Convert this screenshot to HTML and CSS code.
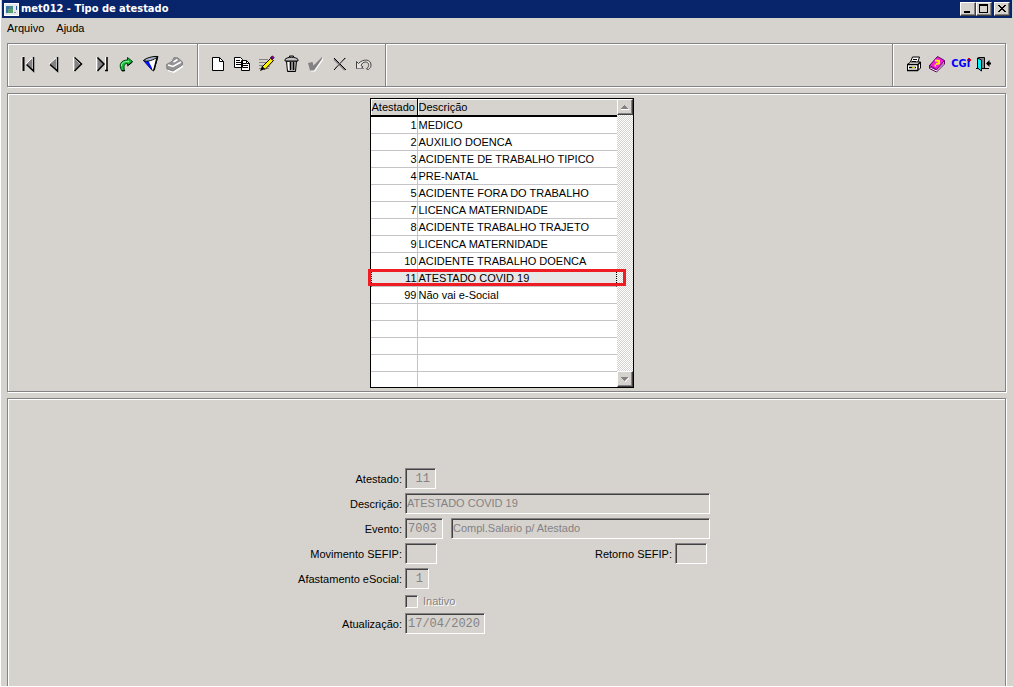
FILE: index.html
```html
<!DOCTYPE html>
<html lang="pt-BR">
<head>
<meta charset="utf-8">
<title>met012 - Tipo de atestado</title>
<link rel="stylesheet" href="styles.css">
</head>
<body>
<div class="window">
  <header class="titlebar">
    <svg class="app-icon" width="15" height="13" viewBox="0 0 15 13" shape-rendering="crispEdges">
      <rect width="15" height="13" fill="#fff"/><rect x="1" y="1" width="13" height="11" fill="#e4e8ec"/>
      <rect x="2" y="3" width="7" height="7" fill="#4a8c8c"/><rect x="2" y="3" width="3" height="7" fill="#3b78a8"/><rect x="4" y="6" width="5" height="4" fill="#5ca070"/>
      <rect x="12" y="3" width="1" height="4" fill="#245a9c"/><rect x="10" y="9" width="2" height="1" fill="#8090a0"/>
    </svg>
    <h1 class="title">met012 - Tipo de atestado</h1>
    <div class="win-buttons">
      <button class="win-btn" aria-label="Minimizar"><svg width="12" height="10" viewBox="0 0 12 10"><rect x="2" y="7" width="6" height="2"/></svg></button>
      <button class="win-btn" aria-label="Maximizar"><svg width="12" height="10" viewBox="0 0 12 10"><path d="M1 0h9v9H1zM2 2v6h7V2z" fill-rule="evenodd"/></svg></button>
      <button class="win-btn win-close" aria-label="Fechar"><svg width="12" height="10" viewBox="0 0 12 10" shape-rendering="crispEdges"><path d="M2 1h2v1h1v1h2V2h1V1h2v1H9v1H8v1H7v1h1v1h1v1h1v1H8V7H7V6H5v1H4v1H2V7h1V6h1V5h1V4H4V3H3V2H2z"/></svg></button>
    </div>
  </header>
  <nav class="menu">
    <button class="menu-item">Arquivo</button>
    <button class="menu-item">Ajuda</button>
  </nav>

  <div class="toolbar" role="toolbar">
    <div class="group group-nav">
      <button class="tool" aria-label="Primeiro"><svg viewBox="0 0 20 20"><path d="M4 3v14M4 3h2" stroke="#fff"/><path d="M5.500 3v14" stroke="#000" stroke-width="2"/><path d="M14.500 3.500v13L8 10z" fill="#848284" stroke="#fff"/><path d="M15.500 3v14L8.500 10.500" fill="none" stroke="#000" stroke-width="1.500"/></svg></button>
      <button class="tool" aria-label="Anterior"><svg viewBox="0 0 20 20"><path d="M13.500 3.500v13L6 10z" fill="#848284" stroke="#fff"/><path d="M14.500 3v14L7 10.500" fill="none" stroke="#000" stroke-width="1.500"/></svg></button>
      <button class="tool" aria-label="Próximo"><svg viewBox="0 0 20 20"><path d="M7.500 3.500v13L14 10z" fill="#848284"/><path d="M6.500 17V3.500L13 10" fill="none" stroke="#fff"/><path d="M7.500 3.500L14.500 10l-7 7" fill="none" stroke="#000" stroke-width="1.500"/></svg></button>
      <button class="tool" aria-label="Último"><svg viewBox="0 0 20 20"><path d="M5.500 3.500v13L12 10z" fill="#848284"/><path d="M4.500 17V3.500" stroke="#fff"/><path d="M5.500 3.500L12 10l-6.500 7" fill="none" stroke="#000" stroke-width="1.500"/><path d="M13.500 3v13" stroke="#fff"/><path d="M15 3v14M13 16.500h3" stroke="#000" stroke-width="1.500"/></svg></button>
      <button class="tool" aria-label="Ir para"><svg viewBox="0 0 20 20"><path d="M11.500 3.500L16.500 7.500l-5 4V9.500C8 9.500 7.500 12 8.500 17H6C2 11 5 6 11.500 6z" fill="#18c038" stroke="#003c10"/><path d="M5.500 12C5 9 8 7 13 7.500" fill="none" stroke="#94ff9c"/><path d="M16.500 8l-5 4M9 16.500H6" stroke="#000"/></svg></button>
      <button class="tool" aria-label="Filtrar"><svg viewBox="0 0 20 20"><path d="M2.500 6.500L17 2.500 12.500 17 10 15z" fill="#fff" stroke="#000"/><path d="M3 7l4.500 0L11 14v2.500z" fill="#0010ff"/><path d="M2.500 6.500C6 8.500 13 6 17 2.500 12 2 5 4 2.500 6.500z" fill="#a8b4c8" stroke="#000"/><path d="M16 4l-3 12" stroke="#000" stroke-width="1.500"/></svg></button>
      <button class="tool" aria-label="Pesquisar"><svg viewBox="0 0 20 20"><path d="M2 12L8 9l2-4 5 1 3 4v3l-9 6-6-2z" fill="#fff"/><path d="M1.500 10.500L7 7.500l2-4 4 .5 4.500 4v3l-9.500 6-6-2z" fill="#949294" stroke="#848284"/><path d="M3 11l5 1.500 8-4.500M8.500 8l4-2.500" fill="none" stroke="#fff" stroke-width="1.500"/></svg></button>
    </div>
    <div class="group group-edit">
      <button class="tool" aria-label="Novo"><svg viewBox="0 0 20 20"><path d="M4.500 3.500h7l4 4v9h-11z" fill="#fff" stroke="#000"/><path d="M11.500 3.500v4h4" fill="none" stroke="#000"/></svg></button>
      <button class="tool" aria-label="Copiar"><svg viewBox="0 0 20 20"><path d="M2.500 3.500h6l2 2v8h-8zM9.500 6.500h5l3 3v7h-8z" fill="#fff" stroke="#000"/><path d="M4 6.500h4M4 8.500h5M4 10.500h5M11 9.500h3M11 11.500h5M11 13.500h5M14.500 6.500v3h3" fill="none" stroke="#000"/></svg></button>
      <button class="tool" aria-label="Editar"><svg viewBox="0 0 20 20"><path d="M2 5.500h9M2 8.500h8M2 11.500h6M2 14.500h10M10 12.500h3" stroke="#848284"/><path d="M5 13L13.500 4.500l3 2L8 15.500z" fill="#ffef00" stroke="#000"/><path d="M13.500 3.500l2-1.500 1.500 1.500-1.500 2z" fill="#840084" stroke="#420042"/><path d="M3 17l2-5 3 3z" fill="#000"/></svg></button>
      <button class="tool" aria-label="Excluir"><svg viewBox="0 0 20 20"><path d="M5.500 7h10l-1 10.500h-8z" fill="#b5b2b5" stroke="#000"/><path d="M7.500 8l.5 8" stroke="#fff" stroke-width="2"/><path d="M9.500 8v8M12.500 8v8" stroke="#000" stroke-width="1.500"/><path d="M4 5.500c2-3 11-3 13 0v1.500H4z" fill="#c6c3c6" stroke="#000"/><path d="M8.500 3V2h4v1" fill="none" stroke="#000"/></svg></button>
      <button class="tool" aria-label="Confirmar"><svg viewBox="0 0 20 20"><path d="M5 11l3-1 1 3 9-9v2L10 17.500H6z" fill="#fff"/><path d="M3 9l4.500-1 1 3.500L17 3v2L9 16.500H5z" fill="#848284"/></svg></button>
      <button class="tool" aria-label="Cancelar"><svg viewBox="0 0 20 20"><path d="M4 5l11 11" stroke="#848284" stroke-width="2"/><path d="M4 4l12 12M15 4L4 16" stroke="#000"/><path d="M16 4L5 14" stroke="#848284"/></svg></button>
      <button class="tool" aria-label="Desfazer"><svg viewBox="0 0 20 20"><path d="M2.500 14.500v-7l2 2C9 4.500 17 5 17 11c0 2-1 3-2.500 4.500l-2-.5C16 12 15 8 11.500 8 9 8 8 9.500 7 11.500l2 1.500-2 1.500z" fill="#e6e4e0" stroke="#424142"/><path d="M3 14.500h7" stroke="#848284"/></svg></button>
    </div>
    <div class="group group-spare"></div>
    <div class="group group-exit">
      <button class="tool" aria-label="Imprimir"><svg viewBox="0 0 20 20"><path d="M6.500 8l2-5h7l-2 6" fill="#fff" stroke="#000"/><path d="M9 5.500h4M8 7.500h4" stroke="#000"/><path d="M3.500 10.500l3-2.500h10v6l-2.500 2.500H3.500z" fill="#fff" stroke="#000"/><path d="M3 10.500h11v6M14 10.500l2.500-2.500M5 13.500h7M3 16.500h11" fill="none" stroke="#000" stroke-width="1.500"/><path d="M8 13.500h3" stroke="#d8c800"/></svg></button>
      <button class="tool" aria-label="Ajuda"><svg viewBox="0 0 20 20"><path d="M2.500 11.500v3l7 3.500 8-8V7z" fill="#fff" stroke="#5c005c"/><path d="M2.500 11.500l8-9 7 4-8 9z" fill="#f718e0" stroke="#5c005c"/><path d="M3 13l6.500 3L17 8.500" fill="none" stroke="#840084"/><path d="M8 6.500l4 .5v2.500l-3 .5M7.500 11.500H9" fill="none" stroke="#ffef00" stroke-width="2"/></svg></button>
      <button class="tool cgi">CGi</button>
      <button class="tool" aria-label="Sair"><svg viewBox="0 0 20 20"><path d="M2 14.500h13" stroke="#000"/><path d="M4.500 3.500h6v11h-6z" fill="#848284" stroke="#000"/><path d="M3.500 4l4 2v11l-4-3z" fill="#00f0f8" stroke="#000"/><path d="M13 9.500h4" stroke="#000" stroke-width="2"/><path d="M12 9.500L15.500 6v7z" fill="#000"/></svg></button>
    </div>
  </div>

  <main class="content">
    <section class="panel list-panel">
      <div class="grid-box">
        <table class="grid">
          <thead><tr><th class="code" scope="col">Atestado</th><th scope="col">Descrição</th></tr></thead>
          <tbody>
            <tr><td class="code">1</td><td>MEDICO</td></tr>
            <tr><td class="code">2</td><td>AUXILIO DOENCA</td></tr>
            <tr><td class="code">3</td><td>ACIDENTE DE TRABALHO TIPICO</td></tr>
            <tr><td class="code">4</td><td>PRE-NATAL</td></tr>
            <tr><td class="code">5</td><td>ACIDENTE FORA DO TRABALHO</td></tr>
            <tr><td class="code">7</td><td>LICENCA MATERNIDADE</td></tr>
            <tr><td class="code">8</td><td>ACIDENTE TRABALHO TRAJETO</td></tr>
            <tr><td class="code">9</td><td>LICENCA MATERNIDADE</td></tr>
            <tr><td class="code">10</td><td>ACIDENTE TRABALHO DOENCA</td></tr>
            <tr class="selected"><td class="code">11</td><td>ATESTADO COVID 19</td></tr>
            <tr><td class="code">99</td><td>Não vai e-Social</td></tr>
            <tr><td class="code"></td><td></td></tr>
            <tr><td class="code"></td><td></td></tr>
            <tr><td class="code"></td><td></td></tr>
            <tr><td class="code"></td><td></td></tr>
            <tr><td class="code"></td><td></td></tr>
          </tbody>
        </table>
        <div class="scroll">
          <button class="scroll-btn" aria-label="Rolar para cima"><svg width="9" height="5" viewBox="0 0 9 5" shape-rendering="crispEdges"><path d="M1 5h8v-1H1z" fill="#fff"/><path d="M4 0h1v1h1v1h1v1h1v1H1V3h1V2h1V1h1z" fill="#848284"/></svg></button>
          <button class="scroll-btn" aria-label="Rolar para baixo"><svg width="9" height="5" viewBox="0 0 9 5" shape-rendering="crispEdges"><path d="M8 1h1L5 5V4z" fill="#fff"/><path d="M1 0h7v1H7v1H6v1H5v1H4V3H3V2H2V1H1z" fill="#848284"/></svg></button>
        </div>
      </div>
    </section>

    <section class="panel form-panel">
      <form class="form">
        <label for="atestado">Atestado:</label>
        <div class="fields"><input id="atestado" class="box num w-code" value="11" disabled></div>
        <label for="descricao">Descrição:</label>
        <div class="fields"><input id="descricao" class="box grow" value="ATESTADO COVID 19" disabled></div>
        <label for="evento">Evento:</label>
        <div class="fields"><input id="evento" class="box mono w-event" value="7003" disabled><input class="box grow" aria-label="Descrição do evento" value="Compl.Salario p/ Atestado" disabled></div>
        <label for="movimento">Movimento SEFIP:</label>
        <div class="fields"><input id="movimento" class="box w-sefip" disabled>
          <div class="return"><label for="retorno">Retorno SEFIP:</label><input id="retorno" class="box w-sefip" disabled></div></div>
        <label for="afastamento">Afastamento eSocial:</label>
        <div class="fields"><input id="afastamento" class="box num w-small" value="1" disabled></div>
        <div class="check"><input id="inativo" class="tick" type="checkbox" disabled><label for="inativo">Inativo</label></div>
        <label for="atualizacao">Atualização:</label>
        <div class="fields"><input id="atualizacao" class="box mono w-date" value="17/04/2020" disabled></div>
      </form>
    </section>
  </main>
</div>
</body>
</html>
```
FILE: styles.css
```css
*, ::after { box-sizing: border-box; }

body {
  margin: 0;
  background: #fff;
  color: #000;
  font: 11px/13px "Liberation Sans", Arial, sans-serif;
}

button, input { font: inherit; color: inherit; }
button { padding: 0; border: 0; background: none; }
svg { display: block; }

.window {
  display: flex;
  flex-direction: column;
  min-height: 100vh;
  padding-left: 2px;
  background: #d6d3ce;
  border-left: 1px solid #fff;
  border-bottom: 1px solid #fff;
}

/* Title bar */
.titlebar {
  display: flex;
  align-items: center;
  height: 18px;
  margin: 0 1px 0 -1px;
  padding: 0 2px;
  background: #08246b;
}
.title {
  margin: 0 auto 0 2px;
  color: #fff;
  font: bold 11px/14px "DejaVu Sans Condensed", "DejaVu Sans", sans-serif;
}
.win-buttons { display: flex; }
.win-btn {
  display: grid;
  place-items: center;
  width: 16px;
  height: 14px;
  background: #d6d3ce;
  border: 1px solid;
  border-color: #fff #424142 #424142 #fff;
  box-shadow: inset -1px -1px #848284;
}
.win-close { margin-left: 2px; }

/* Menu */
.menu { display: flex; gap: 12px; padding: 4px 4px 0; height: 25px; }
.menu-item { height: 13px; }

/* Etched frames */
.toolbar, .panel {
  border: 1px solid #848284;
  box-shadow: inset 1px 1px #fff, 1px 1px #fff;
}

/* Toolbar */
.toolbar {
  display: flex;
  height: 44px;
  margin: 0 7px 0 4px;
}
.group {
  display: flex;
  align-items: center;
  justify-content: space-between;
  border-left: 1px solid #848284;
  box-shadow: inset 1px 0 #fff;
}
.group:first-child { border-left: 0; }
.group-nav { width: 189px; padding: 0 10px 2px 8px; }
.group-edit { width: 188px; padding: 0 9px 2px 8px; }
.group-spare { flex: 1; }
.group-exit { width: 113px; padding: 0 9px 2px; }
.tool { display: grid; place-items: center; width: 24px; height: 24px; }
.tool svg { width: 20px; height: 20px; fill: none; }
.cgi {
  color: #0000ff;
  font: bold 11px/20px "DejaVu Sans Condensed", "DejaVu Sans", sans-serif;
  background: radial-gradient(circle at 20px 8px, #f00 2px, transparent 2px);
}

/* Panels */
.content { flex: 1; display: flex; flex-direction: column; gap: 6px; padding: 6px 7px 0 4px; }
.list-panel { padding: 4px 10px 3px 0; }
.form-panel { flex: 1; padding-top: 69px; border-bottom: 0; }

/* Record list */
.grid-box {
  display: flex;
  width: 264px;
  margin: 0 auto;
  background: #fff;
  border: 1px solid #000;
}
.grid { flex: 1; border-spacing: 0; table-layout: fixed; }
.grid th, .grid td { padding: 0 1px; white-space: nowrap; }
.grid th {
  height: 18px;
  text-align: left;
  font-weight: normal;
  background: #d6d3ce;
  border-bottom: 2px solid #000;
  box-shadow: inset 1px 1px #fff;
}
.grid td { height: 17px; border-bottom: 1px solid #c6c3c6; }
.grid .code { width: 47px; border-right: 1px solid #c6c3c6; }
.grid th.code { border-right-color: #000; }
.grid td.code { text-align: right; padding-right: 0; }
.grid tbody tr:last-child td { height: 15px; border-bottom: 0; }

.selected { position: relative; background: #e7e7e7; }
.selected td:first-child { border-left: 1px dotted #000; }
.selected td:last-child { border-right: 1px dotted #000; }
.selected::after {
  content: "";
  position: absolute;
  z-index: 1;
  top: -1px;
  left: -3px;
  right: -9px;
  height: 17px;
  border: 3px solid #ef1c24;
}

.scroll {
  display: flex;
  flex-direction: column;
  justify-content: space-between;
  width: 16px;
  background: repeating-conic-gradient(#d6d3ce 0 25%, #fff 0 50%) 0 0 / 2px 2px;
}
.scroll-btn {
  display: grid;
  place-items: center;
  height: 16px;
  background: #d6d3ce;
  border: 1px solid;
  border-color: #fff #424142 #424142 #fff;
  box-shadow: inset -1px -1px #848284;
}

/* Record form */
.form {
  display: grid;
  grid-template-columns: 104px 305px;
  justify-content: center;
  align-items: center;
  gap: 4px 3px;
  padding-right: 5px;
}
.form label { padding-top: 1px; }
.form > label { text-align: right; white-space: nowrap; }
.fields { display: flex; align-items: center; gap: 8px; height: 21px; }
.box {
  height: 21px;
  min-width: 0;
  padding: 0 1px 2px;
  color: #848284;
  background: transparent;
  border: 1px solid;
  border-color: #848284 #fff #fff #848284;
  border-radius: 0;
  box-shadow: inset 1px 1px #424142;
}
.mono, .num { font: 12px/15px "Liberation Mono", "Courier New", monospace; padding: 0 2px; }
.num { padding-right: 5px; text-align: right; }
.grow { flex: 1; }
.w-code { width: 31px; }
.w-event { width: 38px; }
.w-sefip { width: 32px; }
.w-small { width: 24px; }
.w-date { width: 80px; }
.return { display: flex; align-items: center; gap: 3px; margin: 0 3px 0 auto; }
.check {
  grid-column: 2;
  display: flex;
  align-items: center;
  gap: 5px;
  height: 16px;
  color: #848284;
  text-shadow: 1px 1px #fff;
}
.tick {
  appearance: none;
  width: 13px;
  height: 13px;
  margin: 0;
  border: 1px solid;
  border-color: #848284 #fff #fff #848284;
  box-shadow: inset 1px 1px #424142;
}
```
